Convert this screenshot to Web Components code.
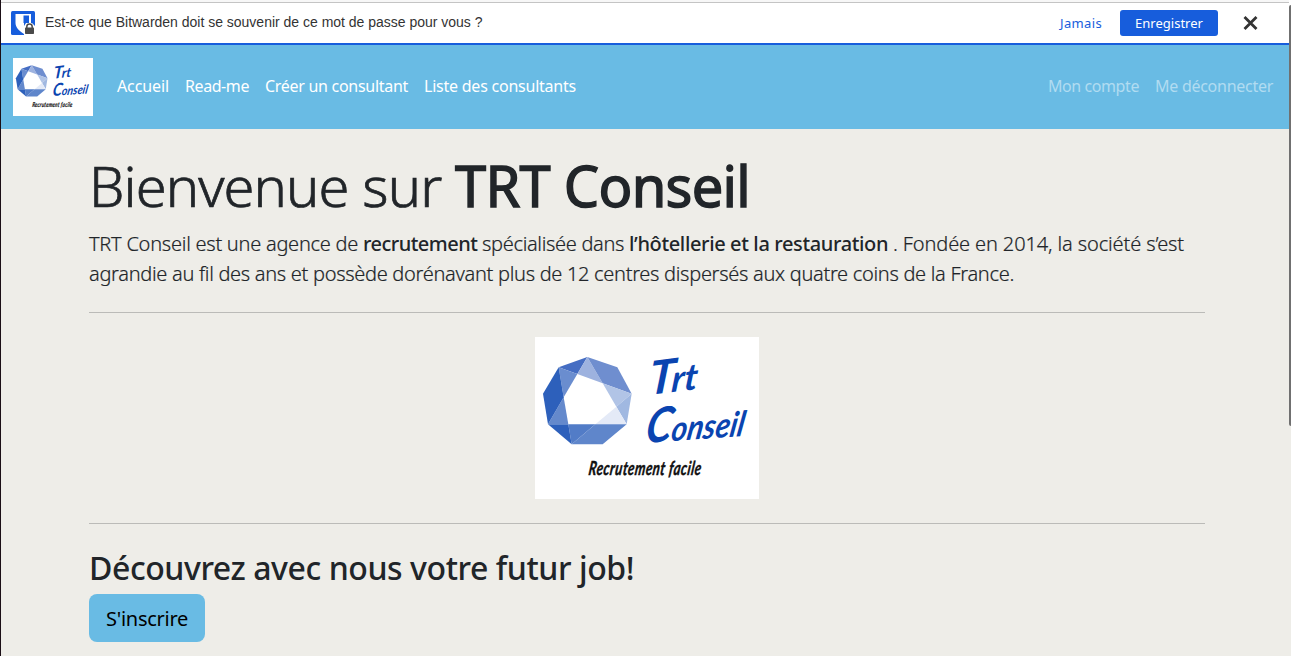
<!DOCTYPE html>
<html lang="fr">
<head>
<meta charset="utf-8">
<title>TRT Conseil</title>
<style>
html,body{margin:0;height:100%;overflow:hidden;background:#eeede8}
</style>
</head>
<body>
<trt-page></trt-page>
<script>
const define = (name, html, ready) => {
  const t = document.createElement('template');
  t.innerHTML = html;
  customElements.define(name, class extends HTMLElement {
    constructor(){ super(); this.attachShadow({mode:'open'}).append(t.content.cloneNode(true)); }
    connectedCallback(){ if (ready) ready(this); }
  });
};

/* Inline text tracked so that it fills the width given in its "w" attribute. */
define('fit-text', `<style>:host{display:inline-block;white-space:pre}span{display:inline-block}</style><span><slot></slot></span>`, el => {
  const s = el.shadowRoot.querySelector('span');
  const w = +el.getAttribute('w');
  const gap = (w - s.getBoundingClientRect().width) / el.textContent.length;
  s.style.letterSpacing = gap + 'px';
  el.style.width = w + 'px';
});

define('trt-logo', `<style>:host{display:block}svg{display:block;width:100%;height:100%;background:#fff;overflow:visible}</style>
<svg viewBox="0 0 224 162" preserveAspectRatio="none">
<g transform="translate(-5 -7) scale(.33333)">
<path fill="#456dc3" d="M86 112L172 81L142 132Z"/>
<path fill="#6a8dcf" d="M86 112L142 132L101 202Z"/>
<path fill="#9db2df" d="M172 81L142 132L218 160Z"/>
<path fill="#6f8ecf" d="M172 81L262 112L305 191L218 160Z"/>
<path fill="#b1c4e6" d="M305 191L218 160L259 230Z"/>
<path fill="#a0b8e1" d="M305 191L259 230L290 283Z"/>
<path fill="#e4eaf7" d="M259 230L290 283H196Z"/>
<path fill="#5f86cb" d="M290 283L218 343H125L196 283Z"/>
<path fill="#527cc7" d="M115 283H196L125 343Z"/>
<path fill="#2d60bb" d="M54 283H115L125 343Z"/>
<path fill="#6489cc" d="M54 283L101 202L115 283Z"/>
<path fill="#2d60bb" d="M86 112L39 191L54 283L101 202Z"/>
</g>
<g font-family="Lato,sans-serif" font-style="italic" font-weight="700">
<text transform="translate(113 58) rotate(-7) skewX(-12) scale(1.12 1.1)" font-size="33" fill="#0a44b0"><tspan font-size="42">T</tspan><tspan dx="-3">rt</tspan></text>
<text transform="translate(109 106) rotate(-4) skewX(-14) scale(1 1.15)" font-size="30" fill="#0a44b0"><tspan font-size="42">C</tspan>onseil</text>
<text transform="translate(53 138) skewX(-8) scale(.75 1.1)" font-size="17.500" fill="#111" stroke="#111" stroke-width=".4" textLength="150">Recrutement facile</text>
</g></svg>`);

define('bitwarden-bar', `<style>
:host{display:flex;align-items:center;box-sizing:border-box;height:45px;border-top:2px solid #f7f7f7;border-bottom:2px solid #175ddc;background:#fff;box-shadow:inset 0 1px #c4c4c4;padding:0 31px 0 10px;font:13px "Noto Sans",sans-serif}
.ic{width:25px;height:24px;margin-right:9px}
.q{font:14px/20px "Liberation Sans",sans-serif;color:#333;flex:1;margin-top:-2px}
.j{color:#175ddc;margin-right:18px}
.b{background:#175ddc;color:#fff;border-radius:3px;width:98px;height:26px;line-height:26px;display:flex;justify-content:center;margin-right:25px}
</style>
<svg class="ic" viewBox="0 0 25 24"><rect width="24" height="24" rx="1.500" fill="#175ddc"/><path d="M4.500 3H20V12H13V23C8 20 4.500 16 4.500 12Z" fill="#fff"/><path d="M12.500 4.500H18V12H12.500Z" fill="#175ddc"/><path d="M13 15L15 12H21L24 15V24H13Z" fill="#fff"/><path d="M15.800 17v-1.300a2.700 2.700 0 0 1 5.400 0V17" fill="none" stroke="#4a4a4a" stroke-width="1.500"/><rect x="14" y="16.500" width="9" height="6.500" rx=".7" fill="#4a4a4a"/></svg>
<div class="q"><fit-text w="437.500">Est-ce que Bitwarden doit se souvenir de ce mot de passe pour vous ?</fit-text></div>
<div class="j"><fit-text w="42">Jamais</fit-text></div>
<div class="b"><fit-text w="68">Enregistrer</fit-text></div>
<svg width="15" height="16" viewBox="0 0 15 15" style="margin-top:1px"><path d="M1.500 1.500L13.500 13.500M13.500 1.500L1.500 13.500" stroke="#333" stroke-width="2.800"/></svg>`);

define('trt-navbar', `<style>
:host{display:flex;align-items:center;height:84px;box-sizing:border-box;background:#69bbe4;color:#fff;padding:0 16px 0 12px;font:16px/24px "Noto Sans",sans-serif}
trt-logo{width:80px;height:58px;margin-right:24px}
nav{display:flex;gap:16px;margin-top:-2px}
.r{margin-left:auto;color:#b1dcf1}
</style><trt-logo></trt-logo>
<nav><fit-text w="52">Accueil</fit-text><fit-text w="64">Read-me</fit-text><fit-text w="143">Créer un consultant</fit-text><fit-text w="152">Liste des consultants</fit-text></nav>
<nav class="r"><fit-text w="91">Mon compte</fit-text><fit-text w="118">Me déconnecter</fit-text></nav>`);

define('trt-button', `<style>:host{display:flex;align-items:center;justify-content:center;box-sizing:border-box;width:116px;height:48px;padding-top:1px;border-radius:8px;background:#69bbe4;color:#000;font:20px/30px "Noto Sans",sans-serif}</style><slot></slot>`);

define('trt-page', `<style>
:host{display:grid;grid-template-columns:1px 1fr 2px;height:656px;overflow:hidden;color:#212529;font-family:"Noto Sans",sans-serif}
.edge{background:#1a0e16}
.rail{padding-top:5px;background:linear-gradient(#fff 45px,#69bbe4 45px 129px,#eeede8 129px)}
.thumb{height:421px;background:#707070;border-radius:2px 0 0 2px}
main{padding:23px 84px 0 88px}
h1{margin:0;font-size:56px;line-height:67px;font-weight:300;white-space:nowrap;-webkit-text-stroke:.7px #212529}
h1 b{font-weight:400;-webkit-text-stroke:1.400px #212529}
.lead{margin:10px 0 0;font-size:20px;line-height:30px;font-weight:300;-webkit-text-stroke:.2px #212529}
.lead div{display:flex;white-space:nowrap}
.lead b{font-weight:500;-webkit-text-stroke:0}
hr{border:0;height:1px;background:#bbbbb8;margin:23px 0 24px}
.fig{width:224px;height:162px;margin:0 auto}
h2{margin:25px 0 7px;font-size:32px;line-height:38px;font-weight:500;white-space:nowrap}
</style>
<div class="edge"></div>
<div><bitwarden-bar></bitwarden-bar><trt-navbar></trt-navbar>
<main>
<h1><fit-text w="366">Bienvenue sur </fit-text><b><fit-text w="295">TRT Conseil</fit-text></b></h1>
<div class="lead">
<div><fit-text w="274">TRT Conseil est une agence de </fit-text><b><fit-text w="119">recrutement </fit-text></b><fit-text w="147">spécialisée dans </fit-text><b><fit-text w="264">l’hôtellerie et la restauration </fit-text></b><fit-text w="291">. Fondée en 2014, la société s’est</fit-text></div>
<div><fit-text w="925">agrandie au fil des ans et possède dorénavant plus de 12 centres dispersés aux quatre coins de la France.</fit-text></div>
</div>
<hr>
<trt-logo class="fig"></trt-logo>
<hr style="margin-bottom:25px;margin-top:24px">
<h2><fit-text w="545">Découvrez avec nous votre futur job!</fit-text></h2>
<trt-button><fit-text w="82">S'inscrire</fit-text></trt-button>
</main></div>
<div class="rail"><div class="thumb"></div></div>`);
</script>
</body>
</html>
